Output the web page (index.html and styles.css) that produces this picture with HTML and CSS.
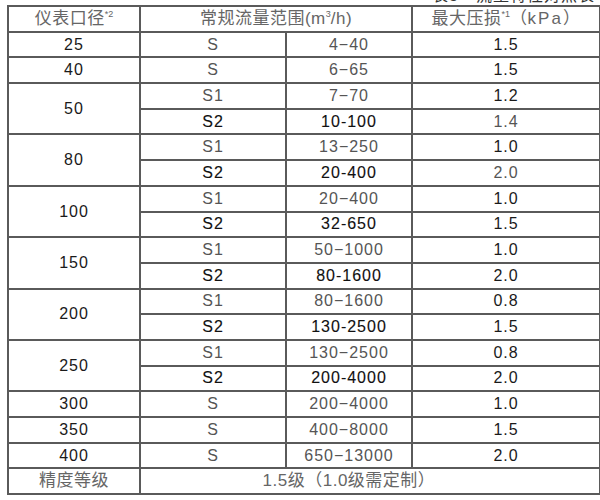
FILE: index.html
```html
<!DOCTYPE html>
<html lang="zh">
<head>
<meta charset="utf-8">
<link rel="stylesheet" href="styles.css">
</head>
<body>
<div class="page">
  <div class="title"><div class="title-inner">表3 · 流量特性对照表</div></div>
  <table class="spec">
    <colgroup>
      <col class="c1"><col class="c2"><col class="c3"><col class="c4">
    </colgroup>
    <tr class="head">
      <td>仪表口径<sup>*2</sup></td>
      <td colspan="2">常规流量范围(m<sup class="cube">3</sup>/h)</td>
      <td>最大压损<sup>*1</sup>（<span class="kpa">kPa</span>）</td>
    </tr>
    <tr><td class="dn">25</td><td class="lt">S</td><td class="lt">4−40</td><td class="dk">1.5</td></tr>
    <tr><td class="dn">40</td><td class="lt">S</td><td class="lt">6−65</td><td class="dk">1.5</td></tr>
    <tr><td class="dn" rowspan="2">50</td><td class="lt">S1</td><td class="lt">7−70</td><td class="dk">1.2</td></tr>
    <tr><td class="bd">S2</td><td class="bd">10-100</td><td class="lt">1.4</td></tr>
    <tr><td class="dn" rowspan="2">80</td><td class="lt">S1</td><td class="lt">13−250</td><td class="dk">1.0</td></tr>
    <tr><td class="bd">S2</td><td class="bd">20-400</td><td class="lt">2.0</td></tr>
    <tr><td class="dn" rowspan="2">100</td><td class="lt">S1</td><td class="lt">20−400</td><td class="dk">1.0</td></tr>
    <tr><td class="bd">S2</td><td class="bd">32-650</td><td class="dk">1.5</td></tr>
    <tr><td class="dn" rowspan="2">150</td><td class="lt">S1</td><td class="lt">50−1000</td><td class="dk">1.0</td></tr>
    <tr><td class="bd">S2</td><td class="bd">80-1600</td><td class="dk">2.0</td></tr>
    <tr><td class="dn" rowspan="2">200</td><td class="lt">S1</td><td class="lt">80−1600</td><td class="dk">0.8</td></tr>
    <tr><td class="bd">S2</td><td class="bd">130-2500</td><td class="dk">1.5</td></tr>
    <tr><td class="dn" rowspan="2">250</td><td class="lt">S1</td><td class="lt">130−2500</td><td class="dk">0.8</td></tr>
    <tr><td class="bd">S2</td><td class="bd">200-4000</td><td class="dk">2.0</td></tr>
    <tr><td class="dn">300</td><td class="lt">S</td><td class="lt">200−4000</td><td class="dk">1.0</td></tr>
    <tr><td class="dn">350</td><td class="lt">S</td><td class="lt">400−8000</td><td class="dk">1.5</td></tr>
    <tr><td class="dn">400</td><td class="lt">S</td><td class="lt">650−13000</td><td class="dk">2.0</td></tr>
    <tr class="foot"><td>精度等级</td><td colspan="3" class="acc">1.5级（1.0级需定制）</td></tr>
  </table>
</div>
</body>
</html>
```

FILE: styles.css
```css
html, body {
  margin: 0;
  padding: 0;
  background: #ffffff;
}
body {
  font-family: "Liberation Sans", "Noto Sans CJK SC", sans-serif;
  color: #222;
}
.page {
  padding-left: 7px;
  width: 593px;
  overflow: hidden;
}
.title {
  height: 5px;
  overflow: hidden;
}
.title-inner {
  margin-top: -12px;
  margin-left: 425px;
  white-space: nowrap;
  font-size: 16px;
  line-height: 16px;
  color: #333;
  letter-spacing: 1px;
}
.spec {
  width: 592px;
  border-collapse: collapse;
  table-layout: fixed;
}
.c1 { width: 132px; }
.c2 { width: 146px; }
.c3 { width: 126px; }
.c4 { width: 188px; }
.spec tr {
  height: 25.7px;
}
.spec td {
  border: 2px solid #5a5a5a;
  padding: 0;
  text-align: center;
  vertical-align: middle;
  font-size: 16px;
  line-height: 18px;
  letter-spacing: 1px;
  white-space: nowrap;
}
.head td, .foot td {
  font-size: 17px;
  color: #666;
  letter-spacing: 0.5px;
}
.head sup {
  font-size: 9px;
  vertical-align: 7px;
  line-height: 0;
  letter-spacing: 0;
}
.head sup.cube {
  font-size: 9px;
  vertical-align: 7px;
}
.kpa {
  letter-spacing: 2px;
}
.dn, .dk {
  color: #1a1a1a;
}
.lt { color: #555; }
.bd {
  color: #111;
  -webkit-text-stroke: 0.12px #111;
}
.acc {
  padding-right: 42px !important;
}
```
